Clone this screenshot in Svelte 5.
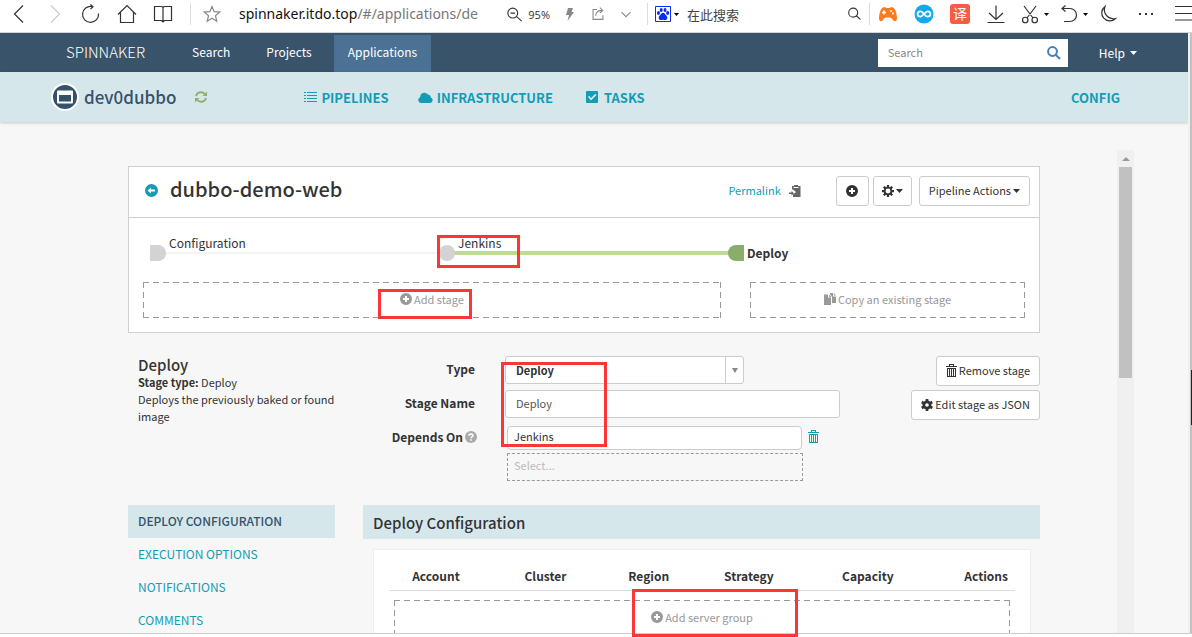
<script lang="ts">
  let stageName = $state("Deploy");

  const primaryNav = ["Search", "Projects", "Applications"];

  const tabs = ["Deploy Configuration", "Execution Options", "Notifications", "Comments"];

  const columns = [
    { label: "Account", width: 15 },
    { label: "Cluster", width: 20 },
    { label: "Region", width: 13 },
    { label: "Strategy", width: 19 },
    { label: "Capacity", width: 19 },
    { label: "Actions", width: 14 },
  ];

  // red boxes drawn over the page
  const marks = [
    { x: 437, y: 235, w: 83, h: 33 },
    { x: 378, y: 289, w: 94, h: 30 },
    { x: 501, y: 362, w: 106, h: 85 },
    { x: 632, y: 589, w: 166, h: 48 },
  ];

  // 20x20 outline icons of the browser bar
  const outline: Record<string, string> = {
    back: "M14 1.500L5.500 10l8.500 8.500",
    forward: "M6 1.500L14.500 10L6 18.500",
    reload: "M17.500 9.500A8 8 0 1 1 11 2.500M9.500 0.500L12 2.800L9.500 5",
    home: "M1 10.500L10 1.500L19 10.500M3.500 8.500V18.500H16.500V8.500",
    book: "M10 3.500C9.500 2.500 9 2.500 8 2.500H1.500V16.500H8.500L10 18L11.500 16.500H18.500V2.500H12C11 2.500 10.500 2.500 10 3.500ZM10 3.500V17",
    star: "M10 2.500L12.100 7.700L17.700 8.100L13.400 11.700L14.800 17.200L10 14.200L5.200 17.200L6.600 11.700L2.300 8.100L7.900 7.700Z",
    zoomout: "M13 9A5.500 5.500 0 1 1 2 9A5.500 5.500 0 0 1 13 9ZM11.800 13L17.500 18M5 9H10",
    share: "M9 5H4.500V16H15.500V11.500M7.500 12C7.500 8 10 6 14.500 6M12 3L15.200 6L12 9",
    chevron: "M5 8L10 13L15 8",
    magnifier: "M13 8.500A5 5 0 1 1 3 8.500A5 5 0 0 1 13 8.500ZM11.800 12.200L16 16",
    download: "M10 1.500V15M3 9L10 15.500L17 9M1.500 18.500H18.500",
    scissors: "M4 2L13 14M16 2L7 14M8 16A2.700 2.700 0 1 1 2.500 16A2.700 2.700 0 0 1 8 16ZM17.500 16A2.700 2.700 0 1 1 12 16A2.700 2.700 0 0 1 17.500 16Z",
    undo: "M3 4.500H11A6.500 6.500 0 0 1 11 17.500H5M6.500 1.500L3 4.500L6.500 7.500",
    moon: "M7 2.500A8 8 0 1 0 17.500 14.500A9 9 0 0 1 7 2.500Z",
    menu: "M1 2.500H20M1 9.500H20M1 16H20",
  };
</script>

{#snippet line(name: string, size = 20)}
  <svg class="line {name}" width={size} height={size} viewBox="0 0 20 20" aria-hidden="true">
    <path d={outline[name]} />
  </svg>
{/snippet}

{#snippet plus()}
  <svg class="icon" width="12" height="12" viewBox="0 0 12 12" aria-hidden="true">
    <path fill-rule="evenodd" d="M6 0a6 6 0 1 0 0 12A6 6 0 0 0 6 0ZM5 3h2v2h2v2H7v2H5V7H3V5h2Z" />
  </svg>
{/snippet}

{#snippet trash()}
  <svg class="icon" width="11" height="13" viewBox="0 0 11 13" aria-hidden="true">
    <path fill-rule="evenodd" d="M3 0h5v2h3v1H0V2h3ZM4 1v1h3V1ZM1 4h9v9H1ZM2 5v7h1V5ZM4 5v7h1V5ZM6 5v7h1V5ZM8 5v7h1V5Z" />
  </svg>
{/snippet}

{#snippet caret()}
  <svg class="icon" width="7" height="4" viewBox="0 0 7 4" aria-hidden="true">
    <path d="M0 0h7L3.500 4Z" />
  </svg>
{/snippet}

{#snippet dot()}
  <svg width="5" height="3" viewBox="0 0 5 3" aria-hidden="true"><path d="M0 0h5L2.500 3Z" /></svg>
{/snippet}

<div class="window">
  <header class="browser">
    <div class="location">
      {#each ["back", "forward", "reload", "home", "book"] as name}
        <button class="tool" aria-label={name}>{@render line(name)}</button>
      {/each}
      <span class="rule"></span>
      <button class="tool" aria-label="Favorite">{@render line("star")}</button>
      <div class="url">spinnaker.itdo.top<span>/#/applications/de</span></div>
      <div class="zoom">{@render line("zoomout", 18)} 95%</div>
      <button class="tool small" aria-label="Speed">
        <svg width="10" height="13" viewBox="0 0 10 13"><path fill="#888" d="M3 0h5L6.500 4H9L2.500 13 4 7H1Z" /></svg>
      </button>
      <button class="tool small" aria-label="Share">{@render line("share", 18)}</button>
      <button class="tool small" aria-label="More">{@render line("chevron", 18)}</button>
    </div>
    <div class="websearch">
      <svg width="16" height="16" viewBox="0 0 16 16" aria-hidden="true">
        <path fill="none" stroke="#0a2bf0" d="M.5.5h15v15H.5Z" />
        <g fill="#0a2bf0">
          <ellipse cx="3.500" cy="7" rx="1.500" ry="2" />
          <ellipse cx="6.200" cy="4" rx="1.500" ry="2" />
          <ellipse cx="10" cy="4" rx="1.500" ry="2" />
          <ellipse cx="12.600" cy="7" rx="1.500" ry="2" />
          <path d="M8 6.800c1.500 0 2 1.600 3.200 2.700 1.600 1.500 1.500 4.500-.7 4.500-1 0-1.500-.3-2.500-.3s-1.500.3-2.500.3c-2.200 0-2.300-3-.7-4.500C6 8.400 6.500 6.800 8 6.800Z" />
        </g>
      </svg>
      {@render dot()}
      <input type="text" placeholder="在此搜索" aria-label="在此搜索" />
      {@render line("magnifier", 18)}
    </div>
    <div class="extras">
      <svg class="badge" width="20" height="18" viewBox="0 0 20 18" aria-hidden="true">
        <path fill="#fb7b1f" d="M5 2.500c2-.8 3 .5 5 .5s3-1.300 5-.5c2.500 1 4 7 4 11 0 3-2.500 3.500-4 1.500-1.200-1.600-1.500-2.500-3-2.500H8c-1.500 0-1.800.9-3 2.500-1.500 2-4 1.500-4-1.500 0-4 1.500-10 4-11Z" />
        <path stroke="#fff" stroke-width="1.500" d="M4 7.500h4M6 5.500v4" />
        <circle cx="13" cy="6" r="1" fill="#fff" />
        <circle cx="15" cy="8.500" r="1" fill="#fff" />
      </svg>
      <svg class="badge" width="20" height="20" viewBox="0 0 20 20" aria-hidden="true">
        <circle cx="10" cy="10" r="9.500" fill="#13a9ef" />
        <path fill="none" stroke="#fff" stroke-width="1.800" d="M10 10C8.500 7.800 7.500 7.300 6.300 7.300a2.700 2.700 0 0 0 0 5.400C8.500 12.700 11.500 7.300 13.700 7.300a2.700 2.700 0 0 1 0 5.400C12.500 12.700 11.500 12.200 10 10Z" />
      </svg>
      <span class="badge translate">译</span>
      {@render line("download")}
      <span class="pair cut">{@render line("scissors")}{@render dot()}</span>
      <span class="pair">{@render line("undo")}{@render dot()}</span>
      {@render line("moon")}
      <svg class="dots" width="16" height="4" viewBox="0 0 16 4" aria-hidden="true"><path fill="#333" d="M1 1h2v2H1ZM7 1h2v2H7ZM13 1h2v2h-2Z" /></svg>
      {@render line("menu")}
    </div>
  </header>

  <div class="view">
    <div class="app">
      <nav class="topbar">
        <div class="container">
          <a class="brand" href="#/">SPINNAKER</a>
          {#each primaryNav as item}
            <a class="navlink" class:active={item === "Applications"} href="#/{item.toLowerCase()}">{item}</a>
          {/each}
          <label class="search">
            <input type="search" placeholder="Search" aria-label="Search" />
            <svg width="14" height="14" viewBox="0 0 14 14" aria-hidden="true">
              <circle cx="5.500" cy="5.500" r="4.400" /><path d="M9 9l4 4" />
            </svg>
          </label>
          <button class="help">Help {@render caret()}</button>
        </div>
      </nav>

      <div class="appbar">
        <div class="container">
          <svg class="logo" width="28" height="28" viewBox="0 0 28 28" aria-hidden="true">
            <circle cx="14" cy="14" r="13" fill="#35526b" stroke="#fff" stroke-width="2" />
            <path fill="#fff" fill-rule="evenodd" d="M7 7.500h14a1 1 0 0 1 1 1v11a1 1 0 0 1-1 1H7a1 1 0 0 1-1-1v-11a1 1 0 0 1 1-1ZM8 12v6.500h12V12Z" />
          </svg>
          <h2>dev0dubbo</h2>
          <button class="refresh" aria-label="Refresh">
            <svg width="12" height="12" viewBox="0 0 12 12">
              <path fill="none" stroke="#8cb166" stroke-width="1.800" d="M1 5A5 4.600 0 0 1 9.800 3M11 7A5 4.600 0 0 1 2.200 9" />
              <path fill="#8cb166" d="M12 .5V5H7.500ZM0 11.500V7h4.500Z" />
            </svg>
          </button>
          <a class="section first" href="#/executions">
            <svg class="icon" width="13" height="10" viewBox="0 0 13 10" aria-hidden="true"><path d="M0 0h2v1H0ZM3 0h10v1H3ZM0 3h2v1H0ZM3 3h10v1H3ZM0 6h2v1H0ZM3 6h10v1H3ZM0 9h2v1H0ZM3 9h10v1H3Z" /></svg>
            PIPELINES</a>
          <a class="section" href="#/clusters">
            <svg class="icon" width="15" height="11" viewBox="0 0 15 11" aria-hidden="true"><path d="M3 11A3 3 0 0 1 2.200 5.200 4.200 4.200 0 0 1 9.800 2.600a2.800 2.800 0 0 1 3 3A2.800 2.800 0 0 1 12.200 11Z" /></svg>
            INFRASTRUCTURE</a>
          <a class="section tasks" href="#/tasks">
            <svg class="icon" width="12" height="12" viewBox="0 0 12 12" aria-hidden="true"><path fill-rule="evenodd" d="M1 0h10a1 1 0 0 1 1 1v10a1 1 0 0 1-1 1H1a1 1 0 0 1-1-1V1a1 1 0 0 1 1-1ZM2 6l3 3.500L10.500 4 9.300 2.800 5 7 3.200 4.800Z" /></svg>
            TASKS</a>
          <a class="section config" href="#/config">CONFIG</a>
        </div>
      </div>

      <main class="container body">
        <div class="content">
          <section class="panel">
            <div class="head">
              <a class="return" href="#/executions" aria-label="Back to executions">
                <svg width="13" height="13" viewBox="0 0 13 13"><path fill="#139cb6" fill-rule="evenodd" d="M6.500 0a6.500 6.500 0 1 0 0 13 6.500 6.500 0 0 0 0-13ZM2.500 6.500L6 3.500v2h4v2H6v2Z" /></svg>
              </a>
              <h1>dubbo-demo-web</h1>
              <a class="permalink" href="#/permalink">Permalink</a>
              <svg width="12" height="12" viewBox="0 0 12 12" aria-hidden="true">
                <path fill="#666" d="M3 1h2V0h4v1h2.500v11H4V9.500L7 7 4 4.500H3Z" />
                <path fill="#666" d="M0 7.500h2.500V6L5 8.200 2.500 10.500V9H0Z" />
                <path fill="#fff" d="M4.500 2h5v1h-5Z" />
              </svg>
              <button class="btn add" aria-label="Create">{@render plus()}</button>
              <button class="btn gear" aria-label="Settings">
                <svg class="icon" width="12" height="12" viewBox="0 0 16 16">
                  <circle cx="8" cy="8" r="4.500" fill="none" stroke="#333" stroke-width="2.400" />
                  <path stroke="#333" stroke-width="3" d="M8 0v3M8 13v3M0 8h3M13 8h3M2.300 2.300l2.200 2.200M11.500 11.500l2.200 2.200M13.700 2.300l-2.200 2.200M4.500 11.500l-2.200 2.200" />
                </svg>
                {@render caret()}
              </button>
              <button class="btn">Pipeline Actions {@render caret()}</button>
            </div>

            <svg class="graph" width="100%" height="64" role="img" aria-label="Pipeline graph">
              <path d="M37 35H318" stroke="#f5f5f5" stroke-width="2" />
              <path d="M318 35H607" stroke="#bddb94" stroke-width="4" />
              <path d="M21 27h8a8 8 0 0 1 0 16h-8Z" fill="#d3d3d3" />
              <circle cx="318" cy="35" r="8" fill="#d3d3d3" />
              <path d="M615 27h-8a8 8 0 0 0 0 16h8Z" fill="#8aad6a" />
              <text x="40" y="30">Configuration</text>
              <text x="329" y="30">Jenkins</text>
              <text class="current" x="618" y="40">Deploy</text>
            </svg>

            <div class="zones">
              <button class="dashed">{@render plus()} Add stage</button>
              <button class="dashed">
                <svg class="icon" width="12" height="12" viewBox="0 0 12 12" aria-hidden="true"><path d="M0 1.500h4v3h3V12H0ZM5 1.500L7.500 4H5ZM6 0h3v3.500h3V10H8V3.500L6 1.500ZM9.800 0L12 2.500H9.800Z" /></svg>
                Copy an existing stage
              </button>
            </div>
          </section>

          <div class="split stage">
            <div class="about">
              <h3>Deploy</h3>
              <p><b>Stage type:</b> Deploy</p>
              <p>Deploys the previously baked or found image</p>
            </div>
            <div class="details">
              <form>
                <label for="type">Type</label>
                <div class="select">
                  <select id="type"><option>Deploy</option></select>
                  <span class="arrow"></span>
                </div>
                <label for="name">Stage Name</label>
                <input id="name" class="name" type="text" bind:value={stageName} />
                <label class="dep" for="depends">Depends On
                  <svg width="12" height="12" viewBox="0 0 12 12" aria-hidden="true">
                    <circle cx="6" cy="6" r="6" fill="#aaa" />
                    <path fill="none" stroke="#fff" stroke-width="1.600" d="M4 4.700C4 2.600 8 2.600 8 4.600 8 5.900 6 5.800 6 7.300M6 8.200v1.500" />
                  </svg>
                </label>
                <div class="depends">
                  <div class="chosen">
                    <span>Jenkins</span>
                    <button class="remove" type="button" aria-label="Remove">{@render trash()}</button>
                  </div>
                  <input id="depends" type="text" placeholder="Select..." />
                </div>
              </form>
              <div class="side">
                <button class="btn">{@render trash()} Remove stage</button>
                <button class="btn">
                  <svg class="icon" width="12" height="12" viewBox="0 0 16 16" aria-hidden="true">
                    <circle cx="8" cy="8" r="4.200" fill="none" stroke="#333" stroke-width="3.600" />
                    <path stroke="#333" stroke-width="3.600" d="M8 0v3M8 13v3M1 4l3 1.800M12 10.200l3 1.800M15 4l-3 1.800M4 10.200L1 12" />
                  </svg>
                  Edit stage as JSON
                </button>
              </div>
            </div>
          </div>

          <div class="split">
            <nav class="tabs">
              {#each tabs as tab, i}
                <a class:active={i === 0} href="#/{i}">{tab}</a>
              {/each}
            </nav>
            <section>
              <h4>Deploy Configuration</h4>
              <div class="card">
                <table>
                  <thead>
                    <tr>
                      {#each columns as col}
                        <th style:width="{col.width}%">{col.label}</th>
                      {/each}
                    </tr>
                  </thead>
                  <tbody>
                    <tr>
                      <td colspan="6"><button class="dashed">{@render plus()} Add server group</button></td>
                    </tr>
                  </tbody>
                </table>
              </div>
            </section>
          </div>
        </div>
        <div class="scrollbar"><span class="up"></span><span class="thumb"></span></div>
      </main>
    </div>
    <div class="edge"><span></span></div>
  </div>
  <footer></footer>

  {#each marks as m}
    <div class="mark" style:left="{m.x}px" style:top="{m.y}px" style:width="{m.w}px" style:height="{m.h}px"></div>
  {/each}
</div>

<style>
  :global(body) {
    background: #fff;
  }
  .window,
  .window :global(*) {
    box-sizing: border-box;
  }
  .window {
    position: relative;
    display: flex;
    flex-direction: column;
    height: 100vh;
    overflow: hidden;
    color: #333;
    font-family: "Noto Sans CJK SC", sans-serif;
    font-size: 11px;
    line-height: 17px;
  }
  button,
  input,
  select {
    margin: 0;
    padding: 0;
    border: 0;
    background: none;
    color: inherit;
    font: inherit;
  }
  a {
    color: #139cb6;
    text-decoration: none;
  }
  h1, h2, h3, h4, p {
    margin: 0;
    font-weight: 500;
  }
  .icon {
    flex: none;
    fill: currentColor;
  }

  /* browser bar */
  .browser {
    display: flex;
    flex: none;
    height: 33px;
    padding-bottom: 4px;
    border-bottom: 1px solid #d6d6d6;
  }
  .line {
    flex: none;
    fill: none;
    stroke: #333;
    stroke-width: 1.2;
  }
  .line.forward {
    stroke: #ccc;
  }
  .line.star,
  .line.share,
  .line.chevron {
    stroke: #888;
  }
  .location {
    display: flex;
    flex: 1;
    align-items: center;
    min-width: 0;
    padding: 0 7px 0 1px;
  }
  .tool {
    display: flex;
    flex: none;
    align-items: center;
    justify-content: center;
    width: 36px;
    height: 28px;
  }
  .tool.small {
    width: 28px;
  }
  .rule {
    width: 1px;
    height: 22px;
    margin: 0 3px 0 9px;
    background: #ddd;
  }
  .url {
    flex: 1;
    min-width: 0;
    margin-left: 9px;
    color: #111;
    font-family: "Noto Sans", sans-serif;
    font-size: 14px;
    line-height: 24px;
    white-space: nowrap;
  }
  .url span {
    color: #777;
  }
  .zoom {
    display: flex;
    flex: none;
    align-items: center;
    gap: 4px;
    margin: 0 6px 0 8px;
    font-family: "Open Sans", sans-serif;
  }
  .websearch {
    display: flex;
    flex: none;
    align-items: center;
    width: 223px;
    height: 22px;
    margin-top: 3px;
    padding: 0 5px 0 7px;
    gap: 3px;
    border: solid #ddd;
    border-width: 0 1px;
  }
  .websearch input {
    flex: 1;
    min-width: 0;
    margin-left: 5px;
    font-size: 13px;
    outline: 0;
  }
  .websearch input::placeholder {
    color: #444;
    opacity: 1;
  }
  .extras {
    display: flex;
    flex: none;
    align-items: center;
    gap: 10px;
    width: 322px;
    padding-left: 8px;
    overflow: hidden;
  }
  .badge {
    flex: none;
    margin-right: 6px;
  }
  .translate {
    width: 20px;
    height: 20px;
    border-radius: 3px;
    background: #fa5b43;
    color: #fff;
    font-size: 14px;
    line-height: 19px;
    text-align: center;
  }
  .pair {
    display: flex;
    align-items: center;
    gap: 4px;
  }
  .cut {
    margin-left: 4px;
  }
  .dots {
    flex: none;
    margin: 0 10px;
  }

  /* application chrome */
  .view {
    display: flex;
    flex: 1;
    min-height: 0;
  }
  .app {
    display: flex;
    flex: 1;
    flex-direction: column;
    min-width: 0;
    background: #f7f7f7;
  }
  .container {
    display: flex;
    width: 100%;
    max-width: 1080px;
    margin: 0 auto;
  }
  .topbar {
    flex: none;
    background: #39536a;
  }
  .topbar .container {
    align-items: center;
    height: 39px;
    padding: 0 0 0 12px;
  }
  .topbar a,
  .help {
    color: #fff;
  }
  .brand {
    margin-right: 25px;
    padding-bottom: 2px;
    font-size: 15px;
    font-weight: 300;
  }
  .navlink {
    align-self: stretch;
    margin: 2px 0 0 8px;
    padding: 8px 14px 0;
    font-size: 12px;
  }
  .navlink.active {
    background: #4b7194;
  }
  .search {
    display: flex;
    align-items: center;
    width: 190px;
    height: 28px;
    margin-left: auto;
    padding: 0 7px 0 10px;
    background: #fff;
  }
  .search input {
    flex: 1;
    min-width: 0;
    color: #333;
  }
  .search input::placeholder {
    color: #888;
  }
  .search svg {
    fill: none;
    stroke: #3d7fc0;
    stroke-width: 2;
  }
  .help {
    display: flex;
    align-items: center;
    gap: 5px;
    margin: 0 -3px 0 31px;
    font-size: 12px;
  }
  .appbar {
    flex: none;
    background: #d6e7eb;
    box-shadow: 0 1px 3px rgb(0 0 0 / 20%);
  }
  .appbar .container {
    align-items: center;
    height: 50px;
  }
  .logo {
    margin-left: -3px;
  }
  h2 {
    margin: 0 19px 0 5px;
    color: #35526b;
    font-size: 17px;
    line-height: 24px;
  }
  .refresh {
    display: flex;
  }
  .section {
    display: flex;
    align-items: center;
    gap: 4px;
    margin-left: 29px;
    font-size: 13px;
    font-weight: 700;
  }
  .section.first {
    margin-left: 97px;
  }
  .section.tasks {
    gap: 6px;
    margin-left: 33px;
  }
  .section.config {
    margin: 0 14px 0 auto;
  }

  /* scrolling body */
  .body {
    flex: 1;
    min-height: 0;
    padding-top: 28px;
  }
  .content {
    flex: 1;
    min-width: 0;
    padding: 16px 77px 0 74px;
    overflow: hidden;
  }
  .scrollbar {
    display: flex;
    flex-direction: column;
    align-items: center;
    width: 17px;
    background: #f0f0f0;
  }
  .up {
    height: 4px;
    margin: 7px 0 6px;
    border: solid transparent;
    border-width: 0 4px 4px;
    border-bottom-color: #999;
  }
  .thumb {
    width: 13px;
    height: 211px;
    background: #c1c1c1;
  }

  .panel {
    border: 1px solid #d0d0d0;
    background: #fff;
  }
  .head {
    display: flex;
    align-items: center;
    height: 51px;
    padding: 0 9px 2px 16px;
    border-bottom: 1px solid #d0d0d0;
  }
  .return {
    display: flex;
    margin-right: 12px;
    padding-bottom: 2px;
  }
  h1 {
    padding-bottom: 4px;
    font-size: 20px;
    line-height: 28px;
  }
  .permalink {
    margin: 0 8px 0 auto;
    padding-bottom: 2px;
  }
  .btn {
    display: flex;
    align-items: center;
    justify-content: center;
    gap: 2px;
    height: 30px;
    padding: 0 9px 1px;
    border: 1px solid #ccc;
    border-radius: 3px;
    background: #fff;
    white-space: nowrap;
  }
  .btn.add {
    width: 33px;
    margin: 0 4px 0 35px;
  }
  .btn.gear {
    width: 39px;
    margin-right: 7px;
    padding: 0 0 1px;
  }
  .graph {
    display: block;
  }
  .graph text {
    fill: #333;
    font-size: 12px;
  }
  .graph .current {
    font-weight: 700;
  }
  .zones {
    display: grid;
    grid-template-columns: 578fr 275fr;
    gap: 29px;
    padding: 0 14px 14px;
  }
  .dashed {
    display: flex;
    align-items: center;
    justify-content: center;
    gap: 2px;
    height: 36px;
    padding-bottom: 2px;
    color: #999;
    background:
      repeating-linear-gradient(90deg, #999 0 6px, transparent 6px 10px) top / 100% 1px no-repeat,
      repeating-linear-gradient(90deg, #999 0 6px, transparent 6px 10px) bottom / 100% 1px no-repeat,
      repeating-linear-gradient(#999 0 6px, transparent 6px 10px) left / 1px 100% no-repeat,
      repeating-linear-gradient(#999 0 6px, transparent 6px 10px) right / 1px 100% no-repeat;
  }

  .split {
    display: grid;
    grid-template-columns: 207px 1fr;
    gap: 28px;
  }
  .stage {
    margin: 23px 0 24px;
  }
  .about {
    padding-left: 10px;
  }
  h3 {
    font-size: 15px;
    line-height: 18px;
  }
  .about p {
    font-weight: 400;
  }
  .details {
    display: flex;
    justify-content: space-between;
  }
  form {
    display: grid;
    grid-template-columns: 112px 335px;
    gap: 6px 30px;
    align-items: start;
  }
  form label {
    padding-top: 4px;
    font-size: 12px;
    font-weight: 700;
    text-align: right;
  }
  .dep {
    display: flex;
    align-items: center;
    justify-content: flex-end;
    gap: 2px;
    margin-right: -2px;
  }
  .select {
    display: flex;
    width: 239px;
    height: 28px;
    border: 1px solid #ccc;
    border-radius: 3px;
    background: #fff;
  }
  select {
    flex: 1;
    padding-left: 10px;
    appearance: none;
    font-weight: 700;
  }
  .arrow {
    display: flex;
    align-items: center;
    justify-content: center;
    width: 18px;
    border-left: 1px solid #ccc;
  }
  .arrow::before {
    border: solid transparent;
    border-width: 5px 3px 0;
    border-top-color: #888;
    content: "";
  }
  .name {
    height: 28px;
    padding: 0 10px 2px;
    border: 1px solid #ccc;
    border-radius: 3px;
    background: #fff;
    color: #555;
  }
  .depends {
    padding: 2px 0 0 2px;
  }
  .chosen {
    display: flex;
    align-items: center;
    gap: 6px;
  }
  .chosen span {
    width: 295px;
    padding: 0 6px 4px;
    border: 1px solid #ccc;
    border-radius: 4px;
    background: #fff;
    line-height: 18px;
  }
  .remove {
    display: flex;
    padding-bottom: 4px;
    color: #139cb6;
  }
  .depends input {
    width: 296px;
    height: 28px;
    margin-top: 3px;
    padding: 0 6px 5px;
    border: 1px dashed #999;
  }
  .depends input::placeholder {
    color: #bbb;
  }
  .side {
    display: flex;
    flex-direction: column;
    align-items: flex-end;
    gap: 4px;
  }

  .tabs a {
    display: block;
    padding: 7px 10px 9px;
    font-size: 12px;
    text-transform: uppercase;
  }
  .tabs .active {
    background: #d6e7eb;
    color: #35526b;
    font-weight: 500;
  }
  h4 {
    padding: 6px 10px 4px;
    background: #d6e7eb;
    font-size: 15px;
    line-height: 24px;
  }
  .card {
    margin: 10px 9px 0 10px;
    padding: 14px 15px;
    border: 1px solid #eee;
    background: #fff;
  }
  table {
    width: 100%;
    border-collapse: collapse;
    table-layout: fixed;
  }
  th {
    padding: 3px 0 6px;
    border-bottom: 1px solid #ddd;
    font-size: 12px;
  }
  th:last-child {
    padding-right: 7px;
    text-align: right;
  }
  td {
    padding: 9px 5px;
  }
  td .dashed {
    width: 100%;
  }

  .edge {
    width: 4px;
    padding-top: 17px;
    background: linear-gradient(90deg, #f0f0f0 2px, #c1c1c1 2px);
  }
  .edge span {
    display: block;
    width: 1px;
    height: 55px;
    margin: 320px 0 0 3px;
    background: #222;
  }
  footer {
    flex: none;
    height: 4px;
    border-top: 1px solid #ccc;
    background: #fff;
  }
  .mark {
    position: absolute;
    border: 3px solid #fb3636;
    pointer-events: none;
  }
</style>
